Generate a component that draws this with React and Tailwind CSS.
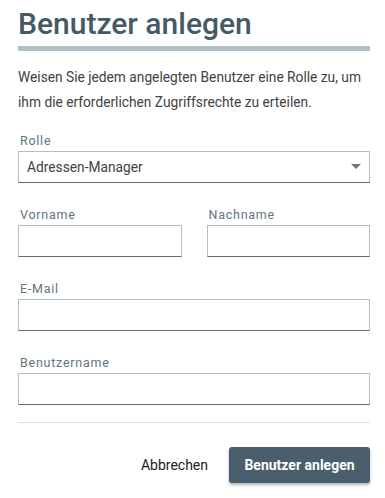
export default function App() {
  const labelCls = "block pl-[2px] text-[12.5px] leading-[16px] tracking-[0.06em] text-[#62757f] mb-[2px]";
  const inputCls =
    "block w-full h-[32px] border border-[#b0bec5] border-b-[#546e7a] bg-white px-[8px] text-[13px] outline-none";

  return (
    <div className="w-[385px] h-[498px] bg-white font-['Roboto',sans-serif] pt-[6px] overflow-hidden">
      <div className="ml-[18px] w-[352px]">
        <h1 className="text-[30px] leading-[36px] font-medium text-[#455a64]">Benutzer anlegen</h1>
        <div className="mt-[4px] h-[5px] w-full bg-[#b0bec5]" />

        <p className="mt-[14px] text-[13.75px] leading-[25px] text-[#424242]">
          Weisen Sie jedem angelegten Benutzer eine Rolle zu, um ihm die erforderlichen Zugriffsrechte zu erteilen.
        </p>

        <div className="mt-[18px]">
          <label className={labelCls}>Rolle</label>
          <div className="relative">
            <div className="flex items-center h-[32px] border border-[#b0bec5] border-b-[#546e7a] px-[8px] text-[13.75px] text-[#424242]">
              Adressen-Manager
            </div>
            <svg className="absolute right-[9px] top-[13px]" width="10" height="5" viewBox="0 0 10 5">
              <path d="M0 0 L10 0 L5 5 Z" fill="#757575" />
            </svg>
          </div>
        </div>

        <div className="mt-[24px] flex gap-[25px]">
          <div className="flex-1">
            <label className={labelCls}>Vorname</label>
            <input className={inputCls} />
          </div>
          <div className="flex-1">
            <label className={labelCls}>Nachname</label>
            <input className={inputCls} />
          </div>
        </div>

        <div className="mt-[24px]">
          <label className={labelCls}>E-Mail</label>
          <input className={inputCls} />
        </div>

        <div className="mt-[24px]">
          <label className={labelCls}>Benutzername</label>
          <input className={inputCls} />
        </div>

        <div className="mt-[17px] h-px bg-[#e0e0e0]" />

        <div className="mt-[24px] flex items-center justify-end gap-[19px]">
          <button className="text-[14px] text-[#212121] px-[2px]">Abbrechen</button>
          <button className="h-[36px] w-[141px] rounded-[3px] bg-[#4a5f6b] text-white text-[14px] font-bold shadow-[0_2px_3px_rgba(0,0,0,0.3)]">
            Benutzer anlegen
          </button>
        </div>
      </div>
    </div>
  );
}
